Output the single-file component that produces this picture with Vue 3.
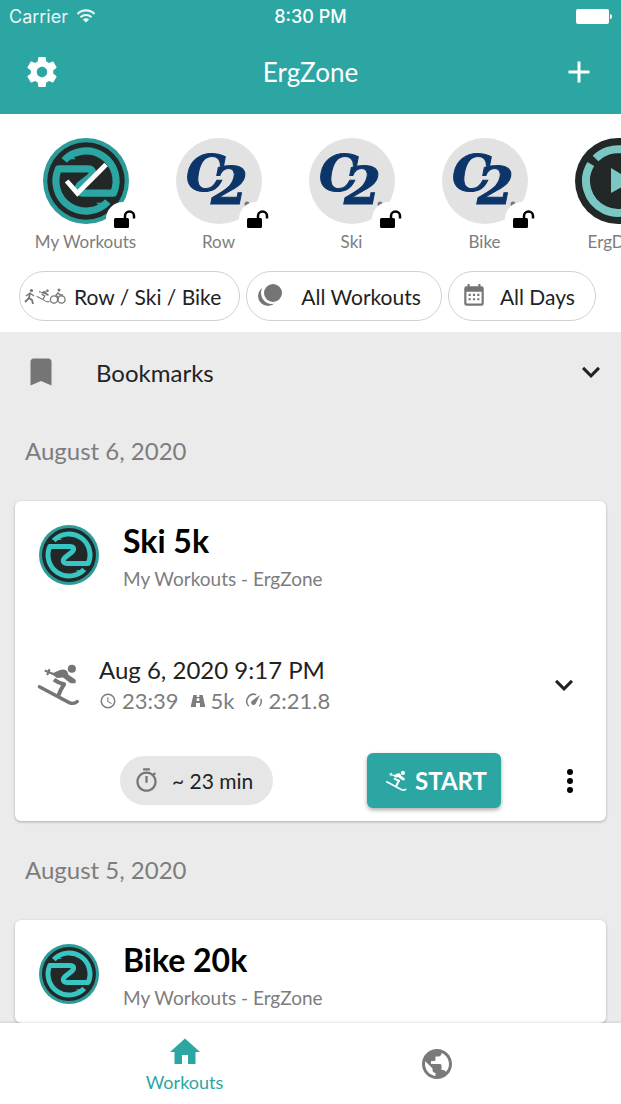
<script setup>
const icons = {
  gear: 'M19.43 12.98c.04-.32.07-.64.07-.98s-.03-.66-.07-.98l2.11-1.65c.19-.15.24-.42.12-.64l-2-3.46c-.12-.22-.39-.3-.61-.22l-2.49 1c-.52-.4-1.08-.73-1.69-.98l-.38-2.65C14.46 2.18 14.25 2 14 2h-4c-.25 0-.46.18-.49.42l-.38 2.65c-.61.25-1.17.59-1.69.98l-2.49-1c-.23-.09-.49 0-.61.22l-2 3.46c-.13.22-.07.49.12.64l2.11 1.65c-.04.32-.07.65-.07.98s.03.66.07.98l-2.11 1.65c-.19.15-.24.42-.12.64l2 3.46c.12.22.39.3.61.22l2.49-1c.52.4 1.08.73 1.69.98l.38 2.65c.03.24.24.42.49.42h4c.25 0 .46-.18.49-.42l.38-2.65c.61-.25 1.17-.59 1.69-.98l2.49 1c.23.09.49 0 .61-.22l2-3.46c.12-.22.07-.49-.12-.64l-2.11-1.65zM12 15.5c-1.93 0-3.5-1.57-3.5-3.5s1.57-3.5 3.5-3.5 3.5 1.57 3.5 3.5-1.57 3.5-3.5 3.5z',
  plus: 'M19 13h-6v6h-2v-6H5v-2h6V5h2v6h6v2z',
  bookmark: 'M17 3H7c-1.1 0-2 .9-2 2v16l7-3 7 3V5c0-1.1-.9-2-2-2z',
  chevron: 'M7.41 8.58L12 13.17l4.59-4.59L18 10l-6 6-6-6z',
  dots: 'M12 16a2 2 0 1 1 0 4 2 2 0 0 1 0-4m0-6a2 2 0 1 1 0 4 2 2 0 0 1 0-4m0-6a2 2 0 1 1 0 4 2 2 0 0 1 0-4z',
  home: 'M10 20v-6h4v6h5v-8h3L12 3 2 12h3v8z',
  globe: 'M12 2C6.48 2 2 6.48 2 12s4.48 10 10 10 10-4.48 10-10S17.52 2 12 2zm-1 17.93c-3.95-.49-7-3.85-7-7.93 0-.62.08-1.21.21-1.79L9 15v1c0 1.1.9 2 2 2v1.93zm6.9-2.54c-.26-.81-1-1.39-1.9-1.39h-1v-3c0-.55-.45-1-1-1H8v-2h2c.55 0 1-.45 1-1V7h2c1.1 0 2-.9 2-2v-.41c2.93 1.19 5 4.06 5 7.41 0 2.08-.8 3.97-2.1 5.39z',
  timer: 'M15 1H9v2h6V1zm-4 13h2V8h-2v6zm8.03-6.61l1.42-1.42c-.43-.51-.9-.99-1.41-1.41l-1.42 1.42C16.07 4.74 14.12 4 12 4c-4.97 0-9 4.03-9 9s4.02 9 9 9 9-4.03 9-9c0-2.12-.74-4.07-1.97-5.61zM12 20c-3.87 0-7-3.13-7-7s3.13-7 7-7 7 3.13 7 7-3.13 7-7 7z',
  calendar: 'M19 3h-1V1h-2v2H8V1H6v2H5a2 2 0 0 0-2 2v14a2 2 0 0 0 2 2h14a2 2 0 0 0 2-2V5a2 2 0 0 0-2-2zm0 16H5V8h14v11zM7 10h2v2H7zm4 0h2v2h-2zm4 0h2v2h-2zm-8 4h2v2H7zm4 0h2v2h-2zm4 0h2v2h-2z',
  clock: 'M12 20a8 8 0 1 0 0-16 8 8 0 0 0 0 16m0-18a10 10 0 1 1 0 20 10 10 0 0 1 0-20m.5 5v5.25l4.5 2.67-.75 1.23L11 13V7h1.5z',
  road: 'M5 3h5v3h4V3h5l4 18h-8v-6H9v6H1zM10 8v4h4V8z',
}
const shelf = [
  { name: 'My Workouts', kind: 'zone' },
  { name: 'Row', kind: 'c2' },
  { name: 'Ski', kind: 'c2' },
  { name: 'Bike', kind: 'c2' },
  { name: 'ErgData', kind: 'play' },
]
const days = [
  {
    date: 'August 6, 2020', title: 'Ski 5k',
    result: { when: 'Aug 6, 2020 9:17 PM', time: '23:39', distance: '5k', pace: '2:21.8' },
    estimate: '~ 23 min',
  },
  { date: 'August 5, 2020', title: 'Bike 20k' },
]
</script>

<template>
  <div class="app">
    <svg class="defs" aria-hidden="true">
      <symbol id="zone" viewBox="0 0 60 60">
        <circle cx="30" cy="30" r="30" fill="#2b9c9a" />
        <circle cx="30" cy="30" r="27" fill="#222727" />
        <path d="M14.800 15.500A21 21 0 0 1 49.200 38.500H28.500C24 38.500 23 35.500 26 32.500L33 27C36 24 34.500 21.500 31 21.500H10.800A21 21 0 0 0 45.200 44.500" fill="none" stroke="currentColor" stroke-width="5" stroke-linejoin="round" />
        <path d="M13 14.800h10l-5-4zM47 45.200H37l5 4z" fill="currentColor" />
      </symbol>
      <symbol id="skier" viewBox="0 0 130 130">
        <circle cx="106" cy="17" r="12" fill="currentColor" />
        <path d="M10 70 98 117q14 6 24-3" fill="none" stroke="currentColor" stroke-width="10" stroke-linecap="round" />
        <path d="M46 32 66 23q14-6 22-2 6 3 7 13l17 12q9 5 4 14H102L80 43 62 44z" fill="currentColor" />
        <path d="M53 49q12 9 30 14L73 80l-7 16" fill="none" stroke="currentColor" stroke-width="12" stroke-linejoin="round" />
        <path d="M26 22 54 34M40 18l-7 18" stroke="currentColor" stroke-width="6" />
      </symbol>
      <symbol id="unlock" viewBox="0 0 22 18">
        <rect x="0" y="8" width="15" height="10" rx="1.500" />
        <path d="M11 9V6a4.500 4.500 0 0 1 9 0v2.500" fill="none" stroke="currentColor" stroke-width="2.500" />
      </symbol>
    </svg>

    <header class="top">
      <div class="status">
        <span class="carrier">Carrier
          <svg width="20" height="14" viewBox="0 0 20 14" fill="none" stroke="currentColor" stroke-width="2.200">
            <path d="M1.500 5a12 12 0 0 1 17 0M4.500 8.200a8 8 0 0 1 11 0" />
            <path d="M10 13.500 6.800 10.500a5 5 0 0 1 6.400 0z" fill="currentColor" stroke="none" />
          </svg>
        </span>
        <span class="clock">8:30 PM</span>
        <svg class="battery" width="36" height="15" viewBox="0 0 36 15" fill="currentColor">
          <rect width="33" height="15" rx="2" /><path d="M34 5q2 0 2 2.500T34 10z" />
        </svg>
      </div>
      <div class="bar">
        <button class="plain" aria-label="Settings"><svg class="i36" viewBox="0 0 24 24"><path :d="icons.gear" /></svg></button>
        <h1>ErgZone</h1>
        <button class="plain" aria-label="Add"><svg class="i36" viewBox="0 0 24 24"><path :d="icons.plus" /></svg></button>
      </div>
    </header>

    <section class="filters">
      <div class="shelf">
        <button v-for="s in shelf" :key="s.name" class="plain item">
          <span class="face">
            <svg v-if="s.kind === 'zone'" class="avatar deep" viewBox="0 0 60 60">
              <use href="#zone" />
              <path d="M16.500 30 24 38.500 44 18.500" fill="none" stroke="#fff" stroke-width="3.400" />
            </svg>
            <svg v-else-if="s.kind === 'c2'" class="avatar" viewBox="0 0 86 86">
              <circle cx="43" cy="43" r="43" fill="#e2e2e2" />
              <text class="mark" x="10" y="53" font-size="50">C<tspan x="35" y="66" font-size="53">2</tspan></text>
              <circle cx="71" cy="66" r="2.500" fill="#777" />
            </svg>
            <svg v-else class="avatar" viewBox="0 0 86 86">
              <circle cx="43" cy="43" r="43" fill="#222727" />
              <g fill="none" stroke="#7ac7c3" stroke-width="8">
                <path d="M20.500 20.500A32 32 0 0 1 73 32" /><path d="M15.800 26A32 32 0 1 0 73 54" />
              </g>
              <path d="M36 30v25l22-12z" fill="#7ac7c3" />
            </svg>
            <span v-if="s.kind !== 'play'" class="badge"><svg width="22" height="18"><use href="#unlock" /></svg></span>
          </span>
          <span class="label">{{ s.name }}</span>
        </button>
      </div>
      <div class="chips">
        <button class="chip sports">
          <svg width="42" height="20" viewBox="0 0 42 20" fill="none" stroke="currentColor" stroke-width="1.300">
            <circle cx="7.500" cy="4.500" r="1.600" fill="currentColor" stroke="none" />
            <path d="M6 7 5 12l3 2 1 4M5 12 1 16" stroke-width="1.800" /><path d="M2 10 6 7l4 3" />
            <use href="#skier" x="12" y="3" width="14" height="14" />
            <circle cx="30" cy="13.500" r="3.600" /><circle cx="37.500" cy="13.500" r="3.600" />
            <circle cx="35" cy="4" r="1.500" fill="currentColor" stroke="none" />
            <path d="M34 14v-3l-2-2 2-2 2 2h3" />
          </svg>
          Row / Ski / Bike
        </button>
        <button class="chip kinds">
          <svg width="26" height="26" viewBox="0 0 26 26">
            <circle cx="10" cy="13" r="10" />
            <circle cx="14" cy="10" r="11" fill="#fff" />
            <circle cx="15" cy="10" r="9" />
          </svg>
          All Workouts
        </button>
        <button class="chip days">
          <svg class="i26" viewBox="0 0 24 24"><path :d="icons.calendar" /></svg>
          All Days
        </button>
      </div>
    </section>

    <main>
      <button class="plain bookmarks">
        <svg class="i36 grey" viewBox="0 0 24 24"><path :d="icons.bookmark" /></svg>
        <span>Bookmarks</span>
        <svg class="i36" viewBox="0 0 24 24"><path :d="icons.chevron" /></svg>
      </button>

      <template v-for="d in days" :key="d.date">
        <h2>{{ d.date }}</h2>
        <article>
          <div class="head">
            <svg class="logo"><use href="#zone" /></svg>
            <div>
              <h3>{{ d.title }}</h3>
              <p>My Workouts - ErgZone</p>
            </div>
          </div>
          <div v-if="d.result" class="result">
            <svg class="sport"><use href="#skier" /></svg>
            <div class="info">
              <p class="when">{{ d.result.when }}</p>
              <p class="stats">
                <svg class="i18" viewBox="0 0 24 24"><path :d="icons.clock" /></svg>
                <span>{{ d.result.time }}</span>
                <svg class="i16" viewBox="0 0 24 24"><path :d="icons.road" /></svg>
                <span>{{ d.result.distance }}</span>
                <svg class="i18" viewBox="0 0 24 24" fill="none" stroke="currentColor" stroke-width="2">
                  <path d="M5 19A9.500 9.500 0 0 1 15 3.500M21 9a9.500 9.500 0 0 1-2 10" />
                  <path d="M20 4 14 16a3 3 0 0 1-5-4z" fill="currentColor" stroke="none" />
                </svg>
                <span>{{ d.result.pace }}</span>
              </p>
            </div>
            <button class="plain" aria-label="Expand"><svg class="i36" viewBox="0 0 24 24"><path :d="icons.chevron" /></svg></button>
          </div>
          <div v-if="d.estimate" class="actions">
            <span class="estimate"><svg class="i27 grey" viewBox="0 0 24 24"><path :d="icons.timer" /></svg>{{ d.estimate }}</span>
            <button class="start"><svg width="22" height="22"><use href="#skier" /></svg>START</button>
            <button class="plain more" aria-label="More"><svg class="i36" viewBox="0 0 24 24"><path :d="icons.dots" /></svg></button>
          </div>
        </article>
      </template>
    </main>

    <nav>
      <a href="#workouts" class="active"><svg class="i36" viewBox="0 0 24 24"><path :d="icons.home" /></svg>Workouts</a>
      <a href="#explore" aria-label="Explore"><svg class="i36" viewBox="0 0 24 24"><path :d="icons.globe" /></svg></a>
    </nav>
  </div>
</template>

<style>
body { margin: 0; }
</style>

<style scoped>
.app { height: 100vh; display: flex; flex-direction: column; overflow: hidden; background: #ebebeb; color: #222; font-family: Lato, "Noto Sans", sans-serif; font-size: 24px; }
.app * { box-sizing: border-box; }
.defs { position: absolute; width: 0; height: 0; }
svg { display: block; flex: none; fill: currentColor; }
svg[fill="none"] { fill: none; }
h1, h2, h3, p { margin: 0; font-weight: 400; }
button { font: inherit; color: inherit; cursor: pointer; }
.plain { border: 0; padding: 0; background: none; }
.i36 { width: 36px; height: 36px; }
.i27 { width: 27px; height: 27px; }
.i26 { width: 26px; height: 26px; }
.i18 { width: 18px; height: 18px; }
.i16 { width: 16px; height: 16px; }
.grey { color: #757575; }

.top { background: #2ba6a3; color: #fff; flex: none; }
.status { display: grid; grid-template-columns: 1fr auto 1fr; align-items: center; height: 32px; padding: 0 9px; font-family: Inter, sans-serif; font-size: 18px; }
.carrier { display: flex; align-items: center; gap: 8px; opacity: .9; }
.clock { font-weight: 500; }
.battery { justify-self: end; }
.bar { display: flex; align-items: center; justify-content: space-between; height: 82px; padding: 0 24px 2px; }
h1 { font-size: 26px; }

.filters { flex: none; background: #fff; padding: 24px 0 11px 19px; }
.shelf { display: flex; overflow: hidden; }
.item { flex: none; width: 133px; display: flex; flex-direction: column; align-items: center; gap: 6px; }
.face { position: relative; }
.avatar { width: 86px; height: 86px; }
.deep { color: #2ba6a3; }
.mark { fill: #0c3569; stroke: #0c3569; stroke-width: 1; font-family: "DejaVu Serif", serif; font-weight: 700; font-style: italic; }
.badge { position: absolute; right: -11px; bottom: -12px; width: 34px; height: 34px; border-radius: 50%; background: #fff; color: #000; display: flex; align-items: center; justify-content: center; padding-left: 4px; }
.label { font-size: 17px; line-height: 24px; color: #7d7d7d; }
.chips { display: flex; gap: 6px; margin-top: 17px; }
.chip { height: 50px; display: flex; align-items: center; border: 1px solid #d0d0d0; border-radius: 25px; background: #fff; font-size: 21px; padding: 0 18px; white-space: nowrap; }
.chip svg { color: #757575; }
.sports { padding-left: 4px; gap: 8px; }
.kinds { padding-left: 11px; padding-right: 20px; gap: 17px; }
.days { padding-left: 12px; padding-right: 20px; gap: 13px; }

main { flex: 1; min-height: 0; overflow-y: auto; scrollbar-width: none; padding: 12px 15px; }
.bookmarks { display: flex; align-items: center; width: 100%; height: 56px; margin-bottom: 2px; padding-left: 8px; text-align: left; }
.bookmarks span { flex: 1; padding-left: 37px; }
.bookmarks svg:last-child { margin-right: -3px; }
h2 { height: 99px; padding-left: 10px; line-height: 98px; font-size: 24px; color: #7d7d7d; }
article { background: #fff; border-radius: 6px; box-shadow: 0 1px 3px #0004; padding: 24px 24px 13px; }
.head { display: flex; gap: 24px; }
.logo { width: 60px; height: 60px; color: #37c6c2; }
h3 { font-size: 32px; font-weight: 700; line-height: 32px; color: #000; }
.head p { margin-top: 10px; font-size: 19px; line-height: 24px; color: #7d7d7d; }
.result { display: flex; align-items: center; margin-top: 63px; }
.sport { width: 44px; height: 44px; margin-left: -3px; color: #757575; }
.info { flex: 1; padding-left: 19px; }
.when { line-height: 32px; }
.stats { display: flex; align-items: center; line-height: 30px; font-size: 22px; color: #7d7d7d; }
.stats span { margin: 0 11px 0 5px; }
.actions { display: flex; align-items: center; margin-top: 37px; }
.estimate { display: flex; align-items: center; gap: 12px; height: 49px; margin-left: 81px; padding: 0 20px 0 13px; border-radius: 25px; background: #e6e6e6; font-size: 21px; }
.start { display: flex; align-items: center; gap: 8px; height: 55px; margin-left: auto; padding: 0 14px 0 18px; border: 0; border-radius: 6px; background: #2ba6a3; color: #fff; font-size: 24px; font-weight: 700; box-shadow: 0 2px 4px #0005; }
.more { margin: 0 -6px 0 51px; color: #000; }

nav { flex: none; display: flex; justify-content: center; height: 81px; background: #fff; box-shadow: 0 0 3px #0003; z-index: 1; }
nav a { flex: 0 1 252px; display: flex; flex-direction: column; align-items: center; justify-content: center; color: #7a7a7a; font-size: 18px; line-height: 24px; text-decoration: none; }
nav .active { color: #2ba6a3; }
</style>
